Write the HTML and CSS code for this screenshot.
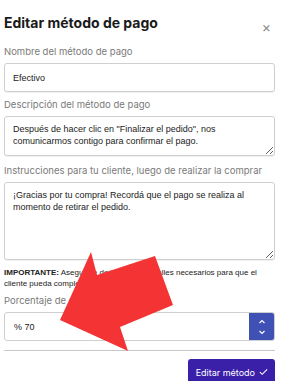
FILE: index.html
```html
<!DOCTYPE html>
<html lang="es">
<head>
    <meta charset="UTF-8">
    <meta name="viewport" content="width=device-width, initial-scale=1.0">
    <title>Editar método de pago</title>
    <link rel="stylesheet" href="styles.css">
</head>
<body>
    <div class="modal">
        <div class="modal-header">
            <h2>Editar método de pago</h2>
            <span class="close">&times;</span>
        </div>

        <label class="field-label">Nombre del método de pago</label>
        <input type="text" class="field" value="Efectivo">

        <label class="field-label">Descripción del método de pago</label>
        <textarea class="field area-short">Después de hacer clic en "Finalizar el pedido", nos comunicarmos contigo para confirmar el pago.</textarea>

        <label class="field-label">Instrucciones para tu cliente, luego de realizar la comprar</label>
        <textarea class="field area-tall">¡Gracias por tu compra! Recordá que el pago se realiza al momento de retirar el pedido.</textarea>

        <p class="note"><b>IMPORTANTE:</b> Asegurate de incluir los detalles necesarios para que el cliente pueda completar la compra.</p>

        <label class="field-label">Porcentaje de descuento</label>
        <div class="number-field">
            <span class="number-value">% 70</span>
            <div class="spinner">
                <svg width="8" height="20" viewBox="0 0 8 20">
                    <path d="M1.5 6 L4 3.5 L6.5 6" fill="none" stroke="#fff" stroke-width="1.2"/>
                    <path d="M1.5 14 L4 16.5 L6.5 14" fill="none" stroke="#fff" stroke-width="1.2"/>
                </svg>
            </div>
        </div>

        <div class="modal-footer">
            <button class="btn-primary">Editar método
                <svg width="9" height="8" viewBox="0 0 10 8">
                    <path d="M1 4.2 L3.6 6.6 L9 1.2" fill="none" stroke="#fff" stroke-width="1.2"/>
                </svg>
            </button>
        </div>
    </div>

    <!-- red arrow annotation over the form -->
    <svg class="arrow" width="282" height="381" viewBox="0 0 282 381">
        <polygon points="60,320 91,252 97,275 155,256 173,305 120,327 128,351" fill="#f43434"/>
    </svg>
</body>
</html>
```

FILE: styles.css
```css
html, body {
    height: 381px;
    overflow: hidden;
}
body {
    margin: 0;
    background-color: #fff;
    font-family: 'Inter', sans-serif;
    color: #222;
    position: relative;
}
.modal {
    padding: 10px 7px 0 4px;
    display: flex;
    flex-direction: column;
}
.modal-header {
    display: flex;
    justify-content: space-between;
    align-items: center;
    margin-bottom: 11px;
}
.modal-header h2 {
    margin: 0;
    font-size: 14px;
    font-weight: 700;
    color: #1a1a1a;
    line-height: 20px;
}
.close {
    color: #888;
    font-size: 14px;
    margin-right: 4px;
    margin-top: 8px;
}
.field-label {
    font-size: 9.5px;
    color: #7a7a7a;
    line-height: 12px;
    margin-bottom: 5px;
}
.field {
    box-sizing: border-box;
    width: 100%;
    border: 1px solid #cfcfcf;
    border-radius: 3px;
    font-family: 'Liberation Sans', Arial, sans-serif;
    font-size: 9px;
    color: #222;
    padding: 0 8px;
    margin: 0 0 9px 0;
    background: #fff;
    box-shadow: 0 1px 1px rgba(0, 0, 0, 0.06);
}
input.field {
    height: 29px;
    margin-bottom: 7px;
}
textarea.field {
    padding: 6px 8px;
    line-height: 12px;
    resize: vertical;
}
.area-short {
    height: 40px;
}
.area-tall {
    height: 78px;
    margin-bottom: 7px;
}
.note {
    margin: 0 0 6px 0;
    font-family: 'Liberation Sans', Arial, sans-serif;
    font-size: 8px;
    line-height: 11px;
    color: #222;
}
.number-field {
    display: flex;
    height: 29px;
    border: 1px solid #cfcfcf;
    border-radius: 3px;
    overflow: hidden;
    box-sizing: border-box;
    margin-bottom: 9px;
}
.number-value {
    flex: 1;
    display: flex;
    align-items: center;
    padding-left: 9px;
    font-family: 'Liberation Sans', Arial, sans-serif;
    font-size: 9px;
    color: #222;
}
.spinner {
    width: 25px;
    background-color: #3f51b5;
    display: flex;
    align-items: center;
    justify-content: center;
}
.modal-footer {
    border-top: 1px solid #c8c8c8;
    padding-top: 8px;
    display: flex;
    justify-content: flex-end;
}
.btn-primary {
    display: flex;
    align-items: center;
    gap: 4px;
    height: 26px;
    padding: 0 7px 0 8px;
    background-color: #3a1fa8;
    color: #fff;
    border: none;
    border-radius: 3px 3px 0 0;
    font-family: 'Inter', sans-serif;
    font-size: 9px;
}
.arrow {
    position: absolute;
    left: 0;
    top: 0;
}
```
